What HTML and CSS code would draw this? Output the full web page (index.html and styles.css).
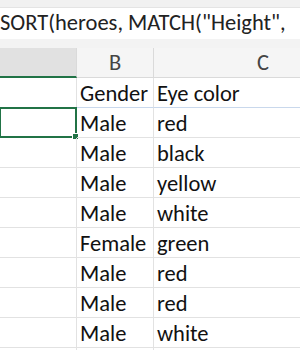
FILE: index.html
```html
<!DOCTYPE html>
<html lang="en">
<head>
    <meta charset="UTF-8">
    <title>Heroes sheet</title>
    <link rel="stylesheet" href="styles.css">
</head>
<body>
    <div class="ribbon-edge"></div>
    <div class="formula-bar">SORT(heroes, MATCH("Height",</div>
    <div class="bar-gap"></div>

    <div class="sheet">
        <!-- column headers -->
        <div class="col-head active"></div>
        <div class="col-head">B</div>
        <div class="col-head wide">C</div>

        <!-- table header row -->
        <div class="cell table-head"></div>
        <div class="cell table-head">Gender</div>
        <div class="cell table-head">Eye color</div>

        <div class="cell selected"><span class="handle"></span></div>
        <div class="cell">Male</div>
        <div class="cell">red</div>

        <div class="cell"></div>
        <div class="cell">Male</div>
        <div class="cell">black</div>

        <div class="cell"></div>
        <div class="cell">Male</div>
        <div class="cell">yellow</div>

        <div class="cell"></div>
        <div class="cell">Male</div>
        <div class="cell">white</div>

        <div class="cell"></div>
        <div class="cell">Female</div>
        <div class="cell">green</div>

        <div class="cell"></div>
        <div class="cell">Male</div>
        <div class="cell">red</div>

        <div class="cell"></div>
        <div class="cell">Male</div>
        <div class="cell">red</div>

        <div class="cell"></div>
        <div class="cell">Male</div>
        <div class="cell">white</div>

        <div class="cell"></div>
        <div class="cell"></div>
        <div class="cell"></div>
    </div>
</body>
</html>
```

FILE: styles.css
```css
/* General */
body {
    margin: 0;
    width: 300px;
    height: 350px;
    overflow: hidden;
    background: #ffffff;
    font-family: Carlito, Lato, "Liberation Sans", sans-serif;
    color: #111;
}

/* Formula bar */
.ribbon-edge {
    height: 8px;
    background: #f1f1f1;
    border-bottom: 1px solid #e4e4e4;
    box-sizing: border-box;
}

.formula-bar {
    height: 31px;
    line-height: 30px;
    font-size: 22.5px;
    white-space: nowrap;
    overflow: hidden;
    background: #ffffff;
    color: #222;
}

.bar-gap {
    height: 9px;
    background: #f3f3f3;
}

/* Grid */
.sheet {
    display: grid;
    grid-template-columns: 77px 77px 1fr;
    grid-auto-rows: 30px;
    height: 302px;
    overflow: hidden;
}

.col-head {
    background: #f5f5f5;
    border-right: 1px solid #dadada;
    border-bottom: 1px solid #dadada;
    font-size: 22.5px;
    color: #444;
    text-align: center;
    line-height: 30px;
}

.col-head.wide {
    border-right: none;
    padding-left: 72px;
}

.col-head.active {
    background: #e1e1e1;
    border-bottom: 2px solid #217346;
}

.cell {
    position: relative;
    border-right: 1px solid #e2e2e2;
    border-bottom: 1px solid #e2e2e2;
    font-size: 22.5px;
    line-height: 22px;
    padding: 5px 3px 0;
    white-space: nowrap;
}

.cell:nth-child(3n) {
    border-right: none;
}

.cell.table-head {
    border-bottom-color: #c9d8ec;
}

/* Active cell */
.cell.selected {
    border: 2px solid #217346;
    margin: -1px 0 0 -1px;
}

.handle {
    position: absolute;
    right: -4px;
    bottom: -4px;
    width: 5px;
    height: 5px;
    background: #217346;
    border: 1px solid #fff;
}
```
